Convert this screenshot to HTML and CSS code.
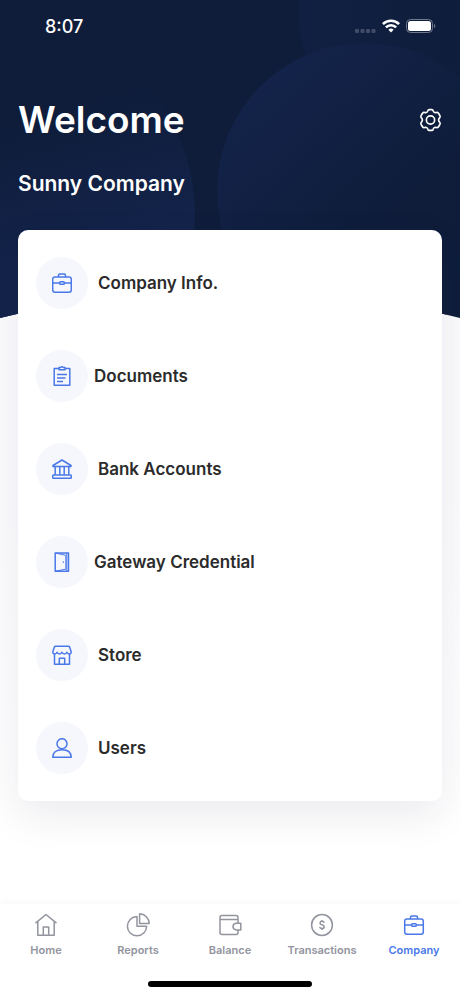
FILE: index.html
```
<!DOCTYPE html>
<html lang="en">
<head>
  <meta charset="UTF-8">
  <meta name="viewport" content="width=device-width, initial-scale=1">
  <title>Company</title>
  <link rel="stylesheet" href="styles.css">
</head>
<body>
  <svg class="hero-bg" viewBox="0 0 460 318" preserveAspectRatio="none" aria-hidden="true">
    <defs>
      <clipPath id="hero-clip"><path d="M0 0H460V318Q230 260 0 318Z"/></clipPath>
      <linearGradient id="glow-main" x1="0.1" y1="0.1" x2="0.55" y2="0.6">
        <stop offset="0" stop-color="#13234a"/>
        <stop offset="1" stop-color="#0f1d3b"/>
      </linearGradient>
      <linearGradient id="glow-left" x1="0.6" y1="0.25" x2="0.7" y2="0.6">
        <stop offset="0" stop-color="#0f1d3b"/>
        <stop offset="1" stop-color="#13234a"/>
      </linearGradient>
      <linearGradient id="glow-top" x1="0" y1="0" x2="0.7" y2="0">
        <stop offset="0" stop-color="#112042"/>
        <stop offset="1" stop-color="#0f1d3b"/>
      </linearGradient>
    </defs>
    <g clip-path="url(#hero-clip)">
      <rect width="460" height="318" fill="#0f1d3b"/>
      <circle cx="430" cy="15" r="131" fill="url(#glow-top)"/>
      <circle cx="0" cy="215" r="195" fill="url(#glow-left)"/>
      <circle cx="365" cy="191" r="148" fill="url(#glow-main)"/>
    </g>
  </svg>

  <div class="status-bar">
    <span class="status-time">8:07</span>
    <div class="status-icons">
      <svg width="21" height="4" viewBox="0 0 21 4" fill="#3f4b67">
        <rect width="4" height="4" rx="1"/>
        <rect x="5.5" width="4" height="4" rx="1"/>
        <rect x="11" width="4" height="4" rx="1"/>
        <rect x="16.5" width="4" height="4" rx="1"/>
      </svg>
      <svg width="18" height="14" viewBox="0 0 18 14" fill="none" stroke="#fff" stroke-width="2.6">
        <path d="M0.9 5.1a11.5 11.5 0 0 1 16.2 0"/>
        <path d="M3.9 8.3a7.2 7.2 0 0 1 10.2 0"/>
        <path d="M9 13.6l-2.6-2.8a3.8 3.8 0 0 1 5.2 0z" fill="#fff" stroke="none"/>
      </svg>
      <svg width="30" height="14" viewBox="0 0 30 14">
        <rect x="0.5" y="0.5" width="26" height="13" rx="4" fill="none" stroke="#6f788d"/>
        <rect x="2" y="2" width="23" height="10" rx="2.5" fill="#fff"/>
        <path d="M28 5v4c1.8-.6 1.8-3.4 0-4z" fill="#6f788d"/>
      </svg>
    </div>
  </div>

  <header class="header">
    <div class="header-row">
      <h1 class="title">Welcome</h1>
      <button class="settings" type="button" aria-label="Settings">
        <svg width="23" height="24" viewBox="0 0 24 24" fill="none" stroke="#fff" stroke-width="1.7" stroke-linejoin="round">
          <path d="M9.3 2.2Q9.6 1.2 10.6 1.2H13.4Q14.4 1.2 14.7 2.2C15.1 3.9 16.5 4.7 18.1 4.2Q19.3 3.8 20 4.6Q21.4 6.1 22 8Q22.3 9 21.5 9.7C20.1 11 20.1 13 21.5 14.3Q22.3 15 22 16Q21.4 17.9 20 19.4Q19.3 20.2 18.1 19.8C16.5 19.3 15.1 20.1 14.7 21.8Q14.4 22.8 13.4 22.8H10.6Q9.6 22.8 9.3 21.8C8.9 20.1 7.5 19.3 5.9 19.8Q4.7 20.2 4 19.4Q2.6 17.9 2 16Q1.7 15 2.5 14.3C3.9 13 3.9 11 2.5 9.7Q1.7 9 2 8Q2.6 6.1 4 4.6Q4.7 3.8 5.9 4.2C7.5 4.7 8.9 3.9 9.3 2.2Z"/>
          <circle cx="12" cy="12" r="4.3"/>
        </svg>
      </button>
    </div>
    <p class="company-name">Sunny Company</p>
  </header>

  <main class="content">
    <nav class="card" aria-label="Company menu">
      <a class="card-item" href="#company-info">
        <span class="card-icon">
          <svg width="20" height="20" viewBox="0 0 20 20">
            <rect x="0.7" y="4" width="18.6" height="15.2" rx="2.2"/>
            <path d="M6.5 4V2.2Q6.5 1 7.7 1h4.6Q13.5 1 13.5 2.2V4M.7 10h6.8M12.5 10h6.8"/>
            <rect x="7.7" y="8.8" width="4.6" height="2.4" rx="0.8"/>
          </svg>
        </span>
        <span>Company Info.</span>
      </a>
      <a class="card-item compact" href="#documents">
        <span class="card-icon">
          <svg width="20" height="20" viewBox="0 0 20 20">
            <path d="M7 2.5H2.2v16.7h15.6V2.5H13"/>
            <path d="M7 1.6h1.5Q10-.2 11.5 1.6H13V3.7H7zM5 8.4h10M5 12h8.5M5 15.6h6"/>
          </svg>
        </span>
        <span>Documents</span>
      </a>
      <a class="card-item" href="#bank-accounts">
        <span class="card-icon">
          <svg width="20" height="20" viewBox="0 0 20 20">
            <path d="M1 7.5v-1L10 1l9 5.5v1zM3.2 7.5v8.3M7.8 7.5v8.3M12.2 7.5v8.3M16.8 7.5v8.3"/>
            <rect x="0.7" y="15.9" width="18.6" height="3.4" rx="1.2"/>
          </svg>
        </span>
        <span>Bank Accounts</span>
      </a>
      <a class="card-item compact" href="#gateway">
        <span class="card-icon">
          <svg width="20" height="20" viewBox="0 0 20 20">
            <path d="M3.2 1h13.3v18.2H3.2z"/>
            <path d="M3.2 1L13.8 3.3v13.9L3.2 19.2M14.8 1v18.2" stroke-width="1"/>
            <path d="M11.3 9.3v1.7" stroke-width="1"/>
          </svg>
        </span>
        <span>Gateway Credential</span>
      </a>
      <a class="card-item" href="#store">
        <span class="card-icon">
          <svg width="20" height="20" viewBox="0 0 20 20">
            <path d="M3.7 1.2h12.6q1 0 1.4 1l1.4 4.3q.3 2.2-1.8 2.4-1.7 0-2.4-1.7-.7 1.7-2.4 1.7T10 7.2q-.8 1.7-2.5 1.7T5.1 7.2Q4.4 8.9 2.7 8.9.6 8.7.9 6.5L2.3 2.2q.4-1 1.4-1z"/>
            <path d="M2.5 9v10.2h15V9M7.3 19v-5.8h5.4V19"/>
          </svg>
        </span>
        <span>Store</span>
      </a>
      <a class="card-item" href="#users">
        <span class="card-icon">
          <svg width="20" height="20" viewBox="0 0 20 20">
            <circle cx="10" cy="5.7" r="5"/>
            <path d="M.8 19.3C.8 14 4.8 11.7 10 11.7s9.2 2.3 9.2 7.6z"/>
          </svg>
        </span>
        <span>Users</span>
      </a>
    </nav>
  </main>

  <footer class="tab-bar">
    <nav class="tabs" aria-label="Main">
      <a class="tab" href="#home">
        <svg width="24" height="24" viewBox="0 0 24 24">
          <path d="M1.5 10.2L12 1.5l10.5 8.7M3.8 8.5v13.7h16.4V8.5M9.3 22v-8h5.4v8"/>
        </svg>
        <span>Home</span>
      </a>
      <a class="tab" href="#reports">
        <svg width="24" height="24" viewBox="0 0 24 24">
          <path d="M11 3.6A9.6 9.6 0 1 0 20.6 13.2H11z"/>
          <path d="M13.6.8A9.8 9.8 0 0 1 23.2 10.4H13.6z"/>
        </svg>
        <span>Reports</span>
      </a>
      <a class="tab" href="#balance">
        <svg width="24" height="24" viewBox="0 0 24 24">
          <path d="M20 10V6.5H2.2M20 6.5V4.6q0-2-2-2H4q-2 0-2 2v14.8q0 2 2 2h14q2 0 2-2V17"/>
          <path d="M22.8 10.3h-4.6q-3.2.4-3.2 3.3t3.2 3.3h4.6z"/>
        </svg>
        <span>Balance</span>
      </a>
      <a class="tab" href="#transactions">
        <svg width="24" height="24" viewBox="0 0 24 24">
          <circle cx="12" cy="12" r="10.4"/>
          <path d="M14.2 9.8q-.4-1.5-2.2-1.5t-2 1.6q0 1.4 2 1.9t2.2 2.1q-.1 1.7-2.2 1.7t-2.3-1.7M12 7v1.3M12 15.6V17"/>
        </svg>
        <span>Transactions</span>
      </a>
      <a class="tab active" href="#company" aria-current="page">
        <svg width="24" height="24" viewBox="0 0 24 24">
          <rect x="2.7" y="6" width="18.6" height="15.2" rx="2.2"/>
          <path d="M8.5 6V4.2Q8.5 3 9.7 3h4.6q1.2 0 1.2 1.2V6M2.7 12h6.8M14.5 12h6.8"/>
          <rect x="9.7" y="10.8" width="4.6" height="2.4" rx="0.8"/>
        </svg>
        <span>Company</span>
      </a>
    </nav>
    <div class="home-indicator"></div>
  </footer>
</body>
</html>
```
FILE: styles.css
```
* {
  box-sizing: border-box;
}

body {
  margin: 0;
  min-height: 100vh;
  display: flex;
  flex-direction: column;
  position: relative;
  background: linear-gradient(#fcfcfe 50%, #fff 80%);
  color: #2b2b2b;
  font-family: Inter, "Liberation Sans", sans-serif;
}

a {
  color: inherit;
  text-decoration: none;
}

/* dark curved backdrop behind the header and the top of the card */
.hero-bg {
  position: absolute;
  top: 0;
  left: 0;
  width: 100%;
  height: 318px;
  z-index: -1;
}

.status-bar {
  display: flex;
  justify-content: space-between;
  align-items: center;
  height: 52px;
  padding: 0 24px 0 45px;
  color: #fff;
}

.status-time {
  font-size: 18px;
  font-weight: 500;
}

.status-icons {
  display: flex;
  align-items: flex-end;
  gap: 6px;
}

.header {
  padding: 44px 18px 0;
  color: #fff;
}

.header-row {
  display: flex;
  justify-content: space-between;
  align-items: center;
}

.title {
  margin: 0;
  font-size: 37px;
  line-height: 48px;
  font-weight: 600;
}

.settings {
  display: flex;
  padding: 0;
  border: none;
  background: transparent;
  cursor: pointer;
}

.company-name {
  margin: 24px 0 0;
  font-size: 21px;
  line-height: 32px;
  font-weight: 600;
}

.content {
  flex: 1;
  padding: 30px 18px 40px;
}

.card {
  display: flex;
  flex-direction: column;
  gap: 41px;
  padding: 27px 18px;
  background: #fff;
  border-radius: 10px;
  box-shadow: 0 14px 40px rgba(30, 35, 80, 0.09);
}

.card-item {
  display: flex;
  align-items: center;
  gap: 10px;
  font-size: 17px;
  font-weight: 600;
}

.card-item.compact {
  gap: 6px;
}

.card-icon {
  display: flex;
  align-items: center;
  justify-content: center;
  width: 52px;
  height: 52px;
  border-radius: 50%;
  background: #f5f7fc;
}

.card-icon svg,
.tab svg {
  fill: none;
  stroke: currentColor;
  stroke-width: 1.5;
  stroke-linejoin: round;
}

.card-icon svg {
  color: #4a78e8;
}

.tab-bar {
  padding: 9px 0;
  background: #fff;
  box-shadow: 0 -2px 6px rgba(0, 0, 0, 0.03);
}

.tabs {
  display: flex;
}

.tab {
  flex: 1 1 0;
  min-width: 0;
  display: flex;
  flex-direction: column;
  align-items: center;
  gap: 6px;
  color: #92949e;
  font-size: 11px;
  line-height: 14px;
  font-weight: 600;
}

.tab.active {
  color: #4a78e8;
}

.home-indicator {
  width: 164px;
  height: 6px;
  margin: 24px auto 0;
  border-radius: 3px;
  background: #000;
}
```
